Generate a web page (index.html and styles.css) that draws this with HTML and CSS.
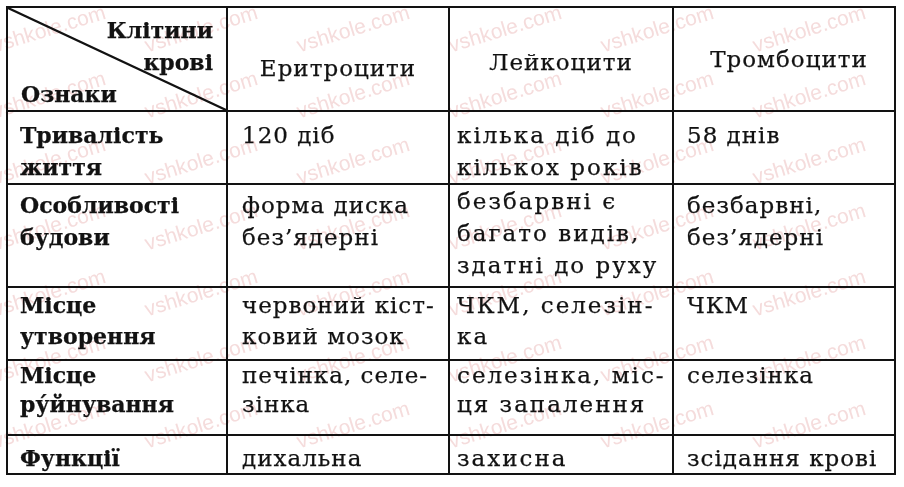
FILE: index.html
```html
<!DOCTYPE html>
<html lang="uk">
<head>
<meta charset="utf-8">
<title>Клітини крові</title>
<link rel="stylesheet" href="styles.css">
</head>
<body>
<div class="page">
  <div class="table">
    <div class="cell corner">
      <svg class="diag" viewBox="0 0 100 100" preserveAspectRatio="none"><line x1="0" y1="0" x2="100" y2="100" vector-effect="non-scaling-stroke"/></svg>
      <div class="corner-top">Клітини<br>крові</div>
      <div class="corner-bottom">Ознаки</div>
    </div>
    <div class="cell head h1">Еритроцити</div>
    <div class="cell head h2">Лейкоцити</div>
    <div class="cell head h3">Тромбоцити</div>

    <div class="cell c0 r1">Тривалість<br>життя</div>
    <div class="cell c1 r1">120 діб</div>
    <div class="cell c2 r1">кілька діб до<br>кількох років</div>
    <div class="cell c3 r1">58 днів</div>

    <div class="cell c0 r2">Особливості<br>будови</div>
    <div class="cell c1 r2">форма диска<br>без’ядерні</div>
    <div class="cell c2 r2 tight">безбарвні є<br>багато видів,<br>здатні до руху</div>
    <div class="cell c3 r2">безбарвні,<br>без’ядерні</div>

    <div class="cell c0 r3">Місце<br>утворення</div>
    <div class="cell c1 r3">червоний кіст-<br>ковий мозок</div>
    <div class="cell c2 r3">ЧКМ, селезін-<br>ка</div>
    <div class="cell c3 r3">ЧКМ</div>

    <div class="cell c0 r4">Місце<br>ру́йнування</div>
    <div class="cell c1 r4">печінка, селе-<br>зінка</div>
    <div class="cell c2 r4">селезінка, міс-<br>ця запалення</div>
    <div class="cell c3 r4">селезінка</div>

    <div class="cell c0 r5">Функції</div>
    <div class="cell c1 r5">дихальна</div>
    <div class="cell c2 r5">захисна</div>
    <div class="cell c3 r5">зсідання крові</div>
  </div>
  <div class="watermark" aria-hidden="true">
    <span class="wm">vshkole.com</span><span class="wm">vshkole.com</span><span class="wm">vshkole.com</span><span class="wm">vshkole.com</span><span class="wm">vshkole.com</span><span class="wm">vshkole.com</span>
    <span class="wm">vshkole.com</span><span class="wm">vshkole.com</span><span class="wm">vshkole.com</span><span class="wm">vshkole.com</span><span class="wm">vshkole.com</span><span class="wm">vshkole.com</span>
    <span class="wm">vshkole.com</span><span class="wm">vshkole.com</span><span class="wm">vshkole.com</span><span class="wm">vshkole.com</span><span class="wm">vshkole.com</span><span class="wm">vshkole.com</span>
    <span class="wm">vshkole.com</span><span class="wm">vshkole.com</span><span class="wm">vshkole.com</span><span class="wm">vshkole.com</span><span class="wm">vshkole.com</span><span class="wm">vshkole.com</span>
    <span class="wm">vshkole.com</span><span class="wm">vshkole.com</span><span class="wm">vshkole.com</span><span class="wm">vshkole.com</span><span class="wm">vshkole.com</span><span class="wm">vshkole.com</span>
    <span class="wm">vshkole.com</span><span class="wm">vshkole.com</span><span class="wm">vshkole.com</span><span class="wm">vshkole.com</span><span class="wm">vshkole.com</span><span class="wm">vshkole.com</span>
    <span class="wm">vshkole.com</span><span class="wm">vshkole.com</span><span class="wm">vshkole.com</span><span class="wm">vshkole.com</span><span class="wm">vshkole.com</span><span class="wm">vshkole.com</span>
  </div>
</div>
</body>
</html>
```
FILE: styles.css
```css
html, body {
  margin: 0;
  padding: 0;
  background: #ffffff;
}

.page {
  position: relative;
  width: 904px;
  height: 487px;
  box-sizing: border-box;
  padding: 6px 0 0 6px;
  overflow: hidden;
}

.table {
  display: grid;
  grid-template-columns: 218px 220px 222px 220px;
  grid-template-rows: 102px 71px 101px 71px 73px 37px;
  gap: 2px;
  padding: 2px;
  width: max-content;
  background: #121212;
  font-family: "DejaVu Serif", "Liberation Serif", serif;
  font-size: 23px;
  letter-spacing: 1px;
  line-height: 32px;
  color: #121212;
  -webkit-text-stroke: 0.25px #121212;
}

.cell {
  background: #ffffff;
  padding: 6px 4px 0 14px;
  white-space: nowrap;
  overflow: visible;
}

.c0 {
  font-size: 22px;
  font-weight: bold;
  letter-spacing: 0;
  padding-left: 12px;
}

.c1 { padding-left: 14px; }
.c2 { padding-left: 7px; letter-spacing: 2px; }
.c3 { padding-left: 13px; }

.r1 { padding-top: 7px; }
.r2 { padding-top: 4px; }
.r2.tight { padding-top: 0; line-height: 32px; }
.r3 { padding-top: 2px; line-height: 31px; }
.r4 { padding-top: 0; line-height: 29px; }
.r5 { padding-top: 6px; }

.head {
  padding-left: 0;
  padding-right: 0;
  text-align: center;
}

.h1 { padding-top: 44px; }
.h2 { padding-top: 38px; }
.h3 { padding-top: 35px; padding-left: 10px; }

.corner {
  position: relative;
  padding: 6px 13px 0 13px;
  font-size: 22px;
  font-weight: bold;
  letter-spacing: 0;
  line-height: 32px;
}

.corner-top {
  text-align: right;
}

.corner-bottom {
  text-align: left;
}

.diag {
  position: absolute;
  left: 0;
  top: 0;
  width: 100%;
  height: 100%;
  overflow: visible;
}

.diag line {
  stroke: #121212;
  stroke-width: 2.4px;
}

.watermark {
  position: absolute;
  inset: 0;
  display: grid;
  grid-template-columns: repeat(6, 152px);
  grid-auto-rows: 66px;
  padding: 18px 0 0 5px;
  pointer-events: none;
  mix-blend-mode: multiply;
  overflow: hidden;
}

.wm {
  display: block;
  width: max-content;
  margin-top: 14px;
  font-family: "Liberation Sans", Arial, sans-serif;
  font-size: 21px;
  line-height: 24px;
  color: #f5dcdc;
  white-space: nowrap;
  transform: rotate(-17deg);
  transform-origin: 0 100%;
}
```
